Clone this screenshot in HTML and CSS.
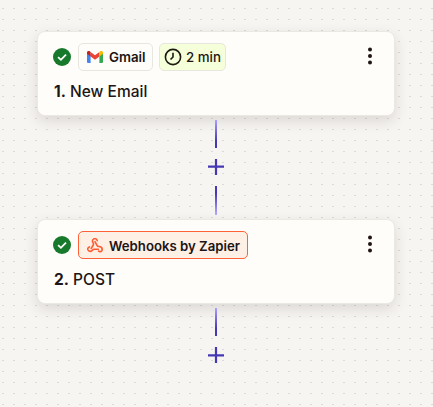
FILE: index.html
```html
<!DOCTYPE html>
<html lang="en">
<head>
<meta charset="utf-8">
<title>Workflow</title>
<link rel="stylesheet" href="styles.css">
</head>
<body>
<main class="flow">
  <section class="card">
    <header class="card-head">
      <svg class="status" viewBox="0 0 18 18"><circle cx="9" cy="9" r="9" fill="#17792b"/><path d="M5.1 9.1 7.9 11.8 13 6.7" fill="none" stroke="#fff" stroke-width="1.8"/></svg>
      <span class="chip chip-app">
        <svg class="gmail" viewBox="0 0 16 12"><path fill="#4285f4" d="M0 1.6 3.6 4.2V12H1.1A1.1 1.1 0 0 1 0 10.9z"/><path fill="#34a853" d="M12.4 4.2 16 1.6v9.3a1.1 1.1 0 0 1-1.1 1.1h-2.5z"/><path fill="#ea4335" d="M3.6.9 8 4.2 12.4.9v4.5L8 8.7 3.6 5.4z"/><path fill="#c5221f" d="M0 1.7C0 .2 1.6-.6 2.8.3l.8.6v4.5L0 2.7z"/><path fill="#fbbc04" d="M12.4.9l.8-.6C14.4-.6 16 .2 16 1.7v1l-3.6 2.7z"/></svg>
        <span class="label">Gmail</span>
      </span>
      <span class="chip chip-time">
        <svg class="clock" viewBox="0 0 18 18"><circle cx="9" cy="9" r="7.6" fill="none" stroke="#1c1a12" stroke-width="1.6"/><path d="M9 4.8V9L6.5 11.5" fill="none" stroke="#1c1a12" stroke-width="1.6"/></svg>
        <span class="label">2 min</span>
      </span>
      <svg class="menu" viewBox="0 0 4 18"><circle cx="2" cy="2.5" r="2"/><circle cx="2" cy="9" r="2"/><circle cx="2" cy="15.5" r="2"/></svg>
    </header>
    <p class="title"><b>1.</b> New Email</p>
  </section>

  <div class="connector">
    <i class="line"></i>
    <svg class="plus" viewBox="0 0 16 16"><path d="M8 0v16M0 7.6h16"/></svg>
    <i class="line line-end"></i>
  </div>

  <section class="card">
    <header class="card-head">
      <svg class="status" viewBox="0 0 18 18"><circle cx="9" cy="9" r="9" fill="#17792b"/><path d="M5.1 9.1 7.9 11.8 13 6.7" fill="none" stroke="#fff" stroke-width="1.8"/></svg>
      <span class="chip chip-hook">
        <svg class="hook" viewBox="0 0 16 15"><g fill="none" stroke="#ff5a30" stroke-width="1.6" stroke-linecap="round" stroke-linejoin="round"><path d="M10.2 2.7A2.4 2.4 0 1 0 6.1 4.7C6.8 5.8 6.7 6.1 6.2 7L4.2 10.6"/><path d="M8 3.6 10 7.4C10.4 8.2 10.8 8.5 11.8 8.5 14 8.5 15.2 9.9 15.2 11.4 15.2 13.4 13 14.2 11.6 13.1"/><path d="M2.5 8.9C1 9.3.5 10.6.9 11.8 1.7 13.8 4.5 13.8 5.5 12.2 5.9 11.5 6.3 11.3 7 11.3H11.4"/></g></svg>
        <span class="label">Webhooks by Zapier</span>
      </span>
      <svg class="menu" viewBox="0 0 4 18"><circle cx="2" cy="2.5" r="2"/><circle cx="2" cy="9" r="2"/><circle cx="2" cy="15.5" r="2"/></svg>
    </header>
    <p class="title"><b>2.</b> POST</p>
  </section>

  <div class="connector">
    <i class="line"></i>
    <svg class="plus" viewBox="0 0 16 16"><path d="M8 0v16M0 8.3h16"/></svg>
  </div>
</main>
</body>
</html>
```
FILE: styles.css
```css
* { box-sizing: border-box; }
body {
  margin: 0;
  height: 407px;
  overflow: hidden;
  background-color: #f7f5f2;
  background-image:
    linear-gradient(#f7f5f2 8px, transparent 8px 9px, #f7f5f2 9px),
    linear-gradient(90deg, #f7f5f2 2px, #dcdad6 2px 4px, #f7f5f2 4px);
  background-size: 11px 11px;
  font-family: Inter, "Liberation Sans", sans-serif;
  color: #201515;
}
.flow {
  display: flex;
  flex-direction: column;
  align-items: center;
  width: 432px;
  padding-top: 31px;
}
.card {
  flex: none;
  width: 358px;
  height: 85px;
  padding: 11px 15px 0 14.5px;
  background: #fffdf9;
  border: 1px solid #ebe9e1;
  border-radius: 8px;
  box-shadow: 0 5px 14px rgba(32, 21, 21, .13);
}
.card-head { display: flex; align-items: center; height: 28px; }
.status { width: 18px; height: 18px; margin-right: 7.5px; }
.chip {
  display: flex;
  align-items: center;
  height: 28px;
  border: 1px solid #e8e7df;
  border-radius: 5px;
  font-size: 13.3px;
  font-weight: 600;
  white-space: nowrap;
}
.chip-app { width: 75px; padding-left: 8px; gap: 6px; }
.chip-time { width: 67px; margin-left: 6px; padding-left: 4px; gap: 4px; background: #f5ffd9; font-weight: 500; font-size: 13.3px; }
.chip-hook { width: 170px; padding-left: 8px; gap: 6px; background: #fff0e6; border-color: #ff6238; font-size: 13.2px; }
.chip-hook .label { padding-top: 2px; }
.gmail { width: 16px; height: 12px; }
.clock { width: 18px; height: 18px; }
.hook { width: 16px; height: 15px; }
.menu { width: 4px; height: 18px; margin: -2px 7px 0 auto; fill: #201515; }
.title { margin: 11px 0 0 1.5px; font-size: 15.5px; line-height: 19px; font-weight: 500; }
.title b { font-weight: 700; }
.connector {
  flex: none;
  display: flex;
  flex-direction: column;
  align-items: center;
  height: 103px;
  padding-top: 4px;
}
.line { width: 2px; height: 28px; background: linear-gradient(#aaa0ff, #4538b4 75%); }
.line-end { height: 29px; background: linear-gradient(#4538b4 25%, #b5adff); }
.plus { width: 16px; height: 16px; margin: 11px 0; fill: none; stroke: #4538b4; stroke-width: 2.2; }
```
